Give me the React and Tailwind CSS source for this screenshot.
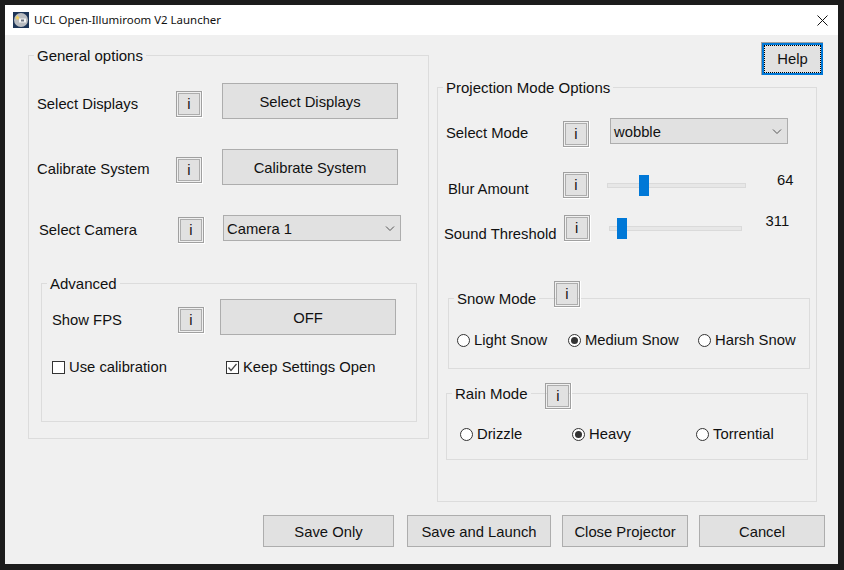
function InfoButton({ className = '' }) {
  return (
    <button className={`w-[27px] h-[27px] shrink-0 border-r border-b border-white ${className}`}>
      <span className="flex w-full h-full border border-[#a0a0a0] p-px">
        <span className="flex flex-1 items-center justify-center border border-[#adadad] bg-[#e1e1e1] pt-px text-[14.67px] leading-none">
          i
        </span>
      </span>
    </button>
  );
}

function GrayButton({ label, className = '' }) {
  return (
    <button className={`flex items-center justify-center border border-[#adadad] bg-[#e1e1e1] pt-[2px] text-[14.8px] ${className}`}>
      {label}
    </button>
  );
}

function Combo({ value, className = '' }) {
  return (
    <div className={`flex items-center justify-between w-[178px] h-[26px] shrink-0 border border-[#adadad] bg-[#e1e1e1] pl-[3px] pr-[5px] pt-[2px] ${className}`}>
      <span>{value}</span>
      <svg width="10" height="6" viewBox="0 0 10 6" fill="none" stroke="#555" strokeWidth="1">
        <path d="M1 0.5 L5 4.5 L9 0.5" />
      </svg>
    </div>
  );
}

function GroupBox({ title, className = '', legendClass = '', children }) {
  return (
    <div className={`relative shrink-0 border border-[#dcdcdc] ${className}`}>
      <span className={`absolute -top-[9px] bg-[#f0f0f0] px-[3px] text-[15px] leading-[18px] ${legendClass}`}>{title}</span>
      {children}
    </div>
  );
}

function Slider({ className = '', thumbClass = '' }) {
  return (
    <div className={`relative h-[5px] shrink-0 border border-[#dadada] bg-[#e7e7e7] ${className}`}>
      <span className={`absolute w-[10px] h-[21px] bg-[#0078d7] ${thumbClass}`} />
    </div>
  );
}

function Checkbox({ label, checked, className = '' }) {
  return (
    <div className={`flex items-center gap-1 ${className}`}>
      <span className="flex items-center justify-center w-[13px] h-[13px] border border-[#333] bg-white">
        {checked && (
          <svg width="11" height="11" viewBox="0 0 11 11" fill="none" stroke="#444" strokeWidth="1.2">
            <path d="M1.5 5.5 L4 8.5 L9.5 2" />
          </svg>
        )}
      </span>
      <span>{label}</span>
    </div>
  );
}

function Radio({ label, checked, className = '' }) {
  return (
    <div className={`flex items-center gap-1 shrink-0 ${className}`}>
      <span className="flex items-center justify-center w-[13px] h-[13px] rounded-full border border-[#333] bg-white">
        {checked && <span className="w-[7px] h-[7px] rounded-full bg-[#333]" />}
      </span>
      <span>{label}</span>
    </div>
  );
}

function AppIcon() {
  return (
    <svg width="16" height="16" viewBox="0 0 16 16" className="shrink-0">
      <rect width="16" height="16" fill="#1d3557" />
      <circle cx="8" cy="8" r="7" fill="#b9bcc0" />
      <rect x="6" y="6.5" width="7" height="4" fill="#f4f4f4" />
      <rect x="8" y="7.5" width="3" height="2" fill="#6b7280" />
      <path d="M4.5 3 L5.3 4.8 L7 5 L5.6 6.1 L6 8 L4.5 7 L3 8 L3.4 6.1 L2 5 L3.7 4.8 Z" fill="#f4d35e" />
    </svg>
  );
}

export default function App() {
  return (
    <div className="w-[844px] h-[570px] overflow-hidden bg-[#1c1c1c] pt-[5px] pl-[5px] font-['Liberation_Sans',sans-serif] text-[14.8px] text-[#111]">
      <div className="flex flex-col w-[833px] h-[559px] bg-[#f0f0f0]">
        {/* Title bar */}
        <div className="flex items-center h-[30px] shrink-0 bg-white pl-[8px] pr-[10px]">
          <AppIcon />
          <span className="ml-[5px] font-['Noto_Sans',sans-serif] text-[11.45px]">UCL Open-Illumiroom V2 Launcher</span>
          <svg width="11" height="11" viewBox="0 0 11 11" fill="none" stroke="#111" strokeWidth="1" className="ml-auto">
            <path d="M0.5 0.5 L10.5 10.5 M10.5 0.5 L0.5 10.5" />
          </svg>
        </div>

        <div className="flex items-start h-[480px] shrink-0">
          {/* General options */}
          <GroupBox title="General options" className="ml-[23px] mt-[20px] w-[401px] h-[384px] pt-[27px]" legendClass="left-[5px]">
            <div className="flex items-center h-[36px]">
              <span className="ml-[8px] w-[139px] mt-[6px]">Select Displays</span>
              <InfoButton className="mt-[6px]" />
              <GrayButton label="Select Displays" className="ml-[19px] w-[176px] h-[36px]" />
            </div>
            <div className="flex items-center h-[36px] mt-[30px]">
              <span className="ml-[8px] w-[139px] mt-[5px]">Calibrate System</span>
              <InfoButton className="mt-[6px]" />
              <GrayButton label="Calibrate System" className="ml-[19px] w-[176px] h-[36px]" />
            </div>
            <div className="flex items-center h-[26px] mt-[30px]">
              <span className="ml-[10px] w-[139px] mt-[4px]">Select Camera</span>
              <InfoButton className="mt-[4px]" />
              <Combo value="Camera 1" className="ml-[18px]" />
            </div>

            {/* Advanced */}
            <GroupBox title="Advanced" className="ml-[12px] mt-[42px] w-[376px] h-[139px] pt-[15px]" legendClass="left-[5px]">
              <div className="flex items-center h-[36px]">
                <span className="ml-[10px] w-[126px] mt-[6px]">Show FPS</span>
                <InfoButton className="mt-[6px]" />
                <GrayButton label="OFF" className="ml-[15px] w-[176px] h-[36px]" />
              </div>
              <div className="flex items-center mt-[21px]">
                <Checkbox label="Use calibration" className="ml-[10px] w-[174px]" />
                <Checkbox label="Keep Settings Open" checked />
              </div>
            </GroupBox>
          </GroupBox>

          <div className="flex flex-col ml-[8px] mt-[7px] w-[386px]">
            {/* Help, keeps the focus ring */}
            <button className="self-end w-[62px] h-[33px] border-l border-t border-[#a0a0a0] border-r-white border-b-white">
              <span className="flex w-full h-full border-2 border-[#0078d7]">
                <span className="flex flex-1 items-center justify-center border border-dotted border-black bg-[#e1e1e1] pt-px">Help</span>
              </span>
            </button>

            {/* Projection Mode Options */}
            <GroupBox title="Projection Mode Options" className="mt-[12px] w-[380px] h-[415px] pt-[30px]" legendClass="left-[5px]">
              <div className="flex items-start h-[29px]">
                <span className="ml-[8px] w-[117px] mt-[4px]">Select Mode</span>
                <InfoButton className="mt-[3px]" />
                <Combo value="wobble" className="ml-[20px]" />
              </div>
              <div className="flex items-start h-[27px] mt-[25px]">
                <span className="ml-[10px] w-[115px] mt-[6px]">Blur Amount</span>
                <InfoButton />
                <Slider className="ml-[17px] mt-[11px] w-[139px]" thumbClass="left-[31px] -top-[9px]" />
                <span className="ml-[31px] -mt-[3px]">64</span>
              </div>
              <div className="flex items-start h-[33px] mt-[11px]">
                <span className="ml-[6px] w-[121px] mt-[13px] whitespace-nowrap">Sound Threshold</span>
                <InfoButton className="mt-[5px]" />
                <Slider className="ml-[18px] mt-[16px] w-[133px]" thumbClass="left-[7px] -top-[9px]" />
                <div className="relative z-10 ml-[6px] w-[69px] h-[33px] bg-[#f0f0f0] pl-[18px]">311</div>
              </div>

              {/* Snow Mode */}
              <GroupBox title="Snow Mode" className="ml-[10px] mt-[55px] w-[362px] h-[71px] pt-[30px]" legendClass="left-[5px]">
                <InfoButton className="absolute left-[105px] -top-[18px]" />
                <div className="flex items-center">
                  <Radio label="Light Snow" className="ml-[8px] w-[111px]" />
                  <Radio label="Medium Snow" checked className="w-[130px]" />
                  <Radio label="Harsh Snow" />
                </div>
              </GroupBox>

              {/* Rain Mode */}
              <GroupBox title="Rain Mode" className="ml-[8px] mt-[24px] w-[362px] h-[67px] pt-[29px]" legendClass="left-[5px]">
                <InfoButton className="absolute left-[98px] -top-[11px]" />
                <div className="flex items-center">
                  <Radio label="Drizzle" className="ml-[13px] w-[112px]" />
                  <Radio label="Heavy" checked className="w-[124px]" />
                  <Radio label="Torrential" />
                </div>
              </GroupBox>
            </GroupBox>
          </div>
        </div>

        {/* Footer buttons */}
        <div className="flex pl-[258px]">
          <GrayButton label="Save Only" className="w-[131px] h-[32px]" />
          <GrayButton label="Save and Launch" className="ml-[13px] w-[144px] h-[32px]" />
          <GrayButton label="Close Projector" className="ml-[11px] w-[126px] h-[32px]" />
          <GrayButton label="Cancel" className="ml-[11px] w-[126px] h-[32px]" />
        </div>
      </div>
    </div>
  );
}
